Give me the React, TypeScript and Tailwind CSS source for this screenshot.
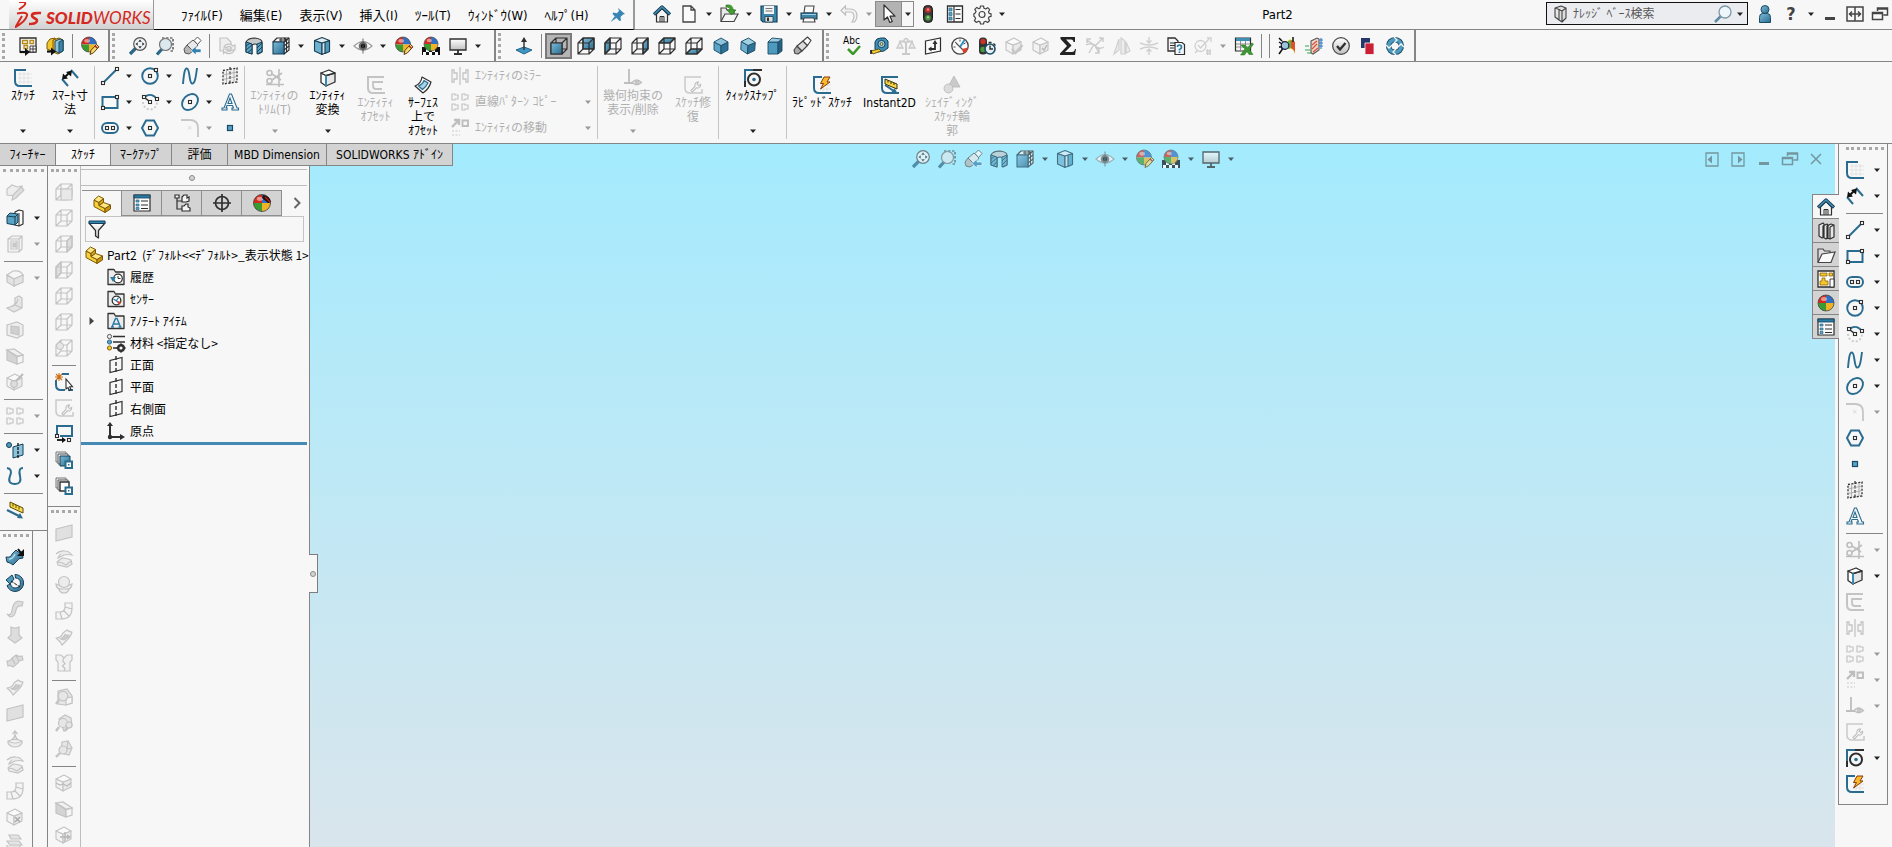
import React from 'react';

const BLUE = '#2a6c90';
const SKY = '#7dbbd8';
const INK = '#2f2f2f';
const MUTE = '#c3c3c3';

const dot = (x: number, y: number) => (
  <rect x={x - 1.5} y={y - 1.5} width="3" height="3" fill="#fff" stroke={INK} strokeWidth="1.1" />
);

const wire = (stroke: string, face?: string, fill = 'url(#blue)', front = false) => (
  <g fill="none" stroke={stroke} strokeWidth="1.2" strokeLinejoin="round">
    {face && !front && <path d={face} fill={fill} />}
    <path d="M1 6h11v11H1zM6 1h11v11H6zM1 6l5-5M12 6l5-5M12 17l5-5M1 17l5-5" />
    {face && front && <path d={face} fill={fill} />}
  </g>
);

const solid = (left: string, right: string, top: string) => (
  <g stroke="#1d4a63" strokeWidth="0.9" strokeLinejoin="round">
    <path d="M2 5l7 3.5V17l-7-4z" fill={left} />
    <path d="M16 5L9 8.500V17l7-4z" fill={right} />
    <path d="M9 1l7 4-7 3.500L2 5z" fill={top} />
  </g>
);

const grayCube = (
  <g stroke={MUTE} strokeWidth="1.1" strokeLinejoin="round">
    <path d="M1 5l7 3v9l-7-4z" fill="#f3f3f3" />
    <path d="M16 5L8 8v9l8-4z" fill="#e9e9e9" />
    <path d="M1 5l8-4 7 4-8 3z" fill="#fafafa" />
  </g>
);

const ball = (cx: number, cy: number, r: number) => (
  <g transform={`translate(${cx} ${cy}) scale(${r / 8})`}>
    <path d="M0 0V-8A8 8 0 0 0-8 0z" fill="#d62a1e" />
    <path d="M0 0H8A8 8 0 0 0 0-8z" fill="#2f6fc4" />
    <path d="M0 0V8A8 8 0 0 0 8 0z" fill="#f0b323" />
    <path d="M0 0H-8A8 8 0 0 0 0 8z" fill="#3a9a34" />
    <ellipse cx="-2" cy="-4" rx="3" ry="2" fill="#fff" opacity="0.5" />
    <circle r="8" fill="none" stroke="#444" strokeWidth="0.8" />
  </g>
);

const pencil = (
  <g strokeLinejoin="round">
    <path d="M9 17.500l1-4.200 5.500-5.800 2.500 2.300-5.500 6z" fill="#f7d774" stroke="#5a3c0c" strokeWidth="1" />
    <path d="M14 9l2.500 2.300" stroke="#b3261c" strokeWidth="1.500" />
  </g>
);

const part = (
  <g stroke="#7a5806" strokeWidth="1" strokeLinejoin="round">
    <path d="M1 5l5 2.500v3l6 3V17.500L1 11.500z" fill="#f6cf3a" />
    <path d="M12 13.500l5.500-3.500v4L12 17.500z" fill="#c9930f" />
    <path d="M1 5l4.500-4 5 2.500L6 7.500z" fill="#ffe680" />
    <path d="M6 7.500l4.500-4v4l-4.500 3z" fill="#d9a41c" />
    <path d="M6 10.500l4.500-3 7 2.500-5.500 3.500z" fill="#ffe680" />
  </g>
);

const repairWrench = (
  <path
    d="M7 14.500l4-4.200a3.200 3.200 0 0 1 3.500-4.200l-1.300 2 1.500 1.500 2-1.200a3.200 3.200 0 0 1-4.300 3.400l-4 4.100z"
    fill="#f2f2f2"
    stroke="#555"
    strokeWidth="1.1"
  />
);

const folder = (
  <path d="M1 16.500V1.500h6l1.500 2.500H17v12.500z" fill="#ececec" stroke="#333" strokeWidth="1.3" strokeLinejoin="round" />
);

const surface = (
  <g stroke={MUTE} strokeWidth="1.2" fill="#f3f3f3" strokeLinejoin="round">
    <path d="M1 10q5 0 7-5l4-3q2 2 5 2-1 4-4 7l-6 6q-1-3-6-7z" />
    <path d="M5 10.500q3 0 5-4 2 1 4 .5-1 3-5 5-2-.5-4-1.500z" fill="#cdcdcd" />
  </g>
);

const icons: Record<string, React.ReactNode> = {
  // sketch tools
  sketch: (
    <g fill="none">
      <path d="M4 5h14M4 9h14M4 13h14M6 3v12M10 3v12M14 3v12" stroke="#dedede" strokeWidth="0.8" />
      <path d="M12 1H1v11q0 5 5 5h12" stroke={BLUE} strokeWidth="2" />
    </g>
  ),
  dimension: (
    <g>
      <path d="M1 10l6 7M10 1l7 8" stroke={BLUE} strokeWidth="2" />
      <path d="M3 9l5.500-5.500" stroke="#111" strokeWidth="2" />
      <path d="M1 10.500l1-6 5 5zM11 1.500l-1 6L5 3z" fill="#111" />
    </g>
  ),
  line: <g><path d="M2 16L16 2" stroke={BLUE} strokeWidth="2" />{dot(2, 16)}{dot(16, 2)}</g>,
  rect: <g><path d="M1.500 4h15v11h-15z" fill="none" stroke={BLUE} strokeWidth="2" />{dot(2, 15)}{dot(16, 4)}</g>,
  slot: (
    <g><rect x="1" y="4" width="16" height="10" rx="5" fill="none" stroke={BLUE} strokeWidth="2" />{dot(6, 9)}{dot(12, 9)}</g>
  ),
  circle: <g><circle cx="9" cy="9" r="7.800" fill="none" stroke={BLUE} strokeWidth="1.900" />{dot(9, 9)}{dot(15, 3)}</g>,
  arc: (
    <g fill="none">
      <path d="M2 9a7 7.500 0 0 0 14 0" stroke="#c9c9c9" strokeWidth="1.800" strokeDasharray="2 2" />
      <path d="M4 4c4-4 10-2 12 3" stroke={BLUE} strokeWidth="1.900" />
      <path d="M3 4l6 5" stroke={INK} strokeWidth="1.500" />
      {dot(3, 4)}{dot(9, 9)}{dot(16, 6)}
    </g>
  ),
  spline: <path d="M2 17C3 5 4 1 6 1.500 9 2 8 16 11 16.500 14 17 15 9 16 1" fill="none" stroke={BLUE} strokeWidth="1.900" />,
  ellipse: (
    <g><ellipse cx="9" cy="9" rx="9" ry="6.800" transform="rotate(-45 9 9)" fill="none" stroke={BLUE} strokeWidth="1.900" />{dot(9, 9)}</g>
  ),
  polygon: <g><path d="M1 9l4-7.500h8L17 9l-4 7.500H5z" fill="none" stroke={BLUE} strokeWidth="2" />{dot(9, 9)}</g>,
  fillet: (
    <g fill="none" stroke="#c6c6c6"><path d="M0 1h9q8 0 8 8v9" strokeWidth="1.800" /><path d="M7 7l3.500 3.500M10.500 7L7 10.500" strokeWidth="0.6" /></g>
  ),
  point: <rect x="6.500" y="6.500" width="5" height="5" fill="#5aa3c4" stroke="#174a66" strokeWidth="1.200" />,
  gridPlane: (
    <g fill="none" stroke={INK}>
      <path d="M2 3.500L16 1v14L2 17z" strokeWidth="1.300" strokeDasharray="2 1.500" fill="#efefef" />
      <path d="M9 0v18" strokeWidth="1.200" strokeDasharray="3 1.500" />
      <path d="M5.500 3v13M13 2v13M2 8l14-3M2 12.500l14-3" strokeWidth="0.7" stroke="#9a9a9a" />
    </g>
  ),
  letter: (
    <g fill="#f7f7f7" stroke={BLUE} strokeWidth="1.100">
      <path d="M1 17h5v-2H5l1-2.500h5.500L12.500 15H11v2h6.500v-2h-1.500L10.500 1h-2L3 15H1zM7 10.500L9 5l2 5.500z" />
    </g>
  ),
  trim: (
    <g fill="none" stroke="#555" strokeWidth="1.600">
      <circle cx="3.500" cy="4" r="2.500" /><circle cx="3.500" cy="12" r="2.500" />
      <path d="M6 5l9 6M6 11l10-7M13 0v18M0 15.500h18" />
    </g>
  ),
  convert: (
    <g stroke={INK} strokeWidth="1.300" strokeLinejoin="round">
      <path d="M2 4l5 2.500V17l-5-3.500z" fill="#fff" /><path d="M7 6.500L16 4v9l-9 4z" fill="#e6e6e6" />
      <path d="M2 4l8-3 6 3-9 2.500z" fill="#fff" /><path d="M7 6.500V17" stroke="#3489b5" strokeWidth="2" />
    </g>
  ),
  offset: (
    <g fill="none" stroke="#666" strokeWidth="2"><path d="M17 1H1v11q0 5 5 5h12" /><path d="M16 6H6v4q0 3 3 3h6" strokeWidth="1.800" /></g>
  ),
  surfaceOffset: (
    <g fill="#f7f7f7" stroke={INK} strokeWidth="1.200" strokeLinejoin="round">
      <path d="M1 10Q7 8 8 1l9 5q-2 7-8 11z" />
      <path d="M4.500 10Q9 8 10 4.500l4 2.500q-2 4-5.500 6.500z" fill="#a9d3e6" stroke={BLUE} />
    </g>
  ),
  mirror: (
    <g fill="none" stroke="#666" strokeWidth="1.300"><path d="M9 0v18M1 3v12h2v-3h3V6H3V3zM17 3v12h-2v-3h-3V6h3V3z" /></g>
  ),
  pattern: (
    <g fill="none" stroke="#666" strokeWidth="1.200">
      <path d="M1 1v6h3V6h3V2H4V1zM11 1v6h3V6h3V2h-3V1zM1 11v6h3v-1h3v-4H4v-1zM11 11v6h3v-1h3v-4h-3v-1z" />
    </g>
  ),
  move: (
    <g fill="none" stroke="#555">
      <path d="M1 8l6-6M3 1h5v5" strokeWidth="2.400" /><path d="M11.500 1.500h5.500v5.500h-5.500z" strokeWidth="1.900" />
      <path d="M1 12h8M1 16h8" strokeWidth="2" strokeDasharray="2 1.500" opacity="0.4" />
    </g>
  ),
  relation: (
    <g fill="none" stroke="#555"><path d="M5 0v14M0 14h9" strokeWidth="1.800" />
      <path d="M8 13.500q4.500-5 9.500 0q-5 4.500-9.500 0z" strokeWidth="1.300" /><circle cx="13" cy="13.500" r="2" fill="#777" /></g>
  ),
  repair: <g><path d="M17 1H1v11q0 5 5 5h12V13" fill="none" stroke="#777" strokeWidth="1.500" />{repairWrench}</g>,
  snap: (
    <g fill="none"><path d="M1 18V1h17" stroke={BLUE} strokeWidth="2" /><path d="M9 1h9M1 12v6" stroke={INK} strokeWidth="2" />
      <circle cx="10" cy="10.500" r="6" stroke={INK} strokeWidth="2" /><circle cx="10" cy="10.500" r="1.800" fill={BLUE} /></g>
  ),
  rapid: (
    <g><path d="M7 9h11M7 13h11M10 6v10M14 6v10" stroke="#dcdcdc" strokeWidth="0.8" />
      <path d="M9 1H1v11q0 5 5 5h12" fill="none" stroke={BLUE} strokeWidth="2" />
      <path d="M11 1h6l-3 5h3L7.500 13l3-5.500H7.500z" fill="#f8b92a" stroke="#8a3b0c" strokeWidth="1" /></g>
  ),
  instant2d: (
    <g><path d="M17 1H1v11q0 5 5 5h12" fill="none" stroke={BLUE} strokeWidth="2" />
      <path d="M4 3l12 5v5L4 8z" fill="#f6d54a" stroke="#3a3000" strokeWidth="1" /><path d="M7 4.500v2M10 6v2M13 7v2" stroke="#3a3000" />
      <path d="M4 9l8 5.500" stroke={BLUE} strokeWidth="2" /><path d="M16 16.500l-5.500-.5 3-4z" fill={BLUE} /></g>
  ),
  shaded: (
    <g fill="#777" stroke="#444" strokeWidth="0.8"><path d="M11 0l6 11H5z" /><circle cx="5.500" cy="12.500" r="4.500" fill="#aaa" /></g>
  ),

  // standard toolbar
  home: (
    <g strokeLinejoin="round"><path d="M3.500 9v8h11V9L9 3.500z" fill="#f4f4f4" stroke={INK} strokeWidth="1.200" />
      <path d="M7 17v-5.500h4V17M9 11.500V17" fill="none" stroke={INK} strokeWidth="1" />
      <path d="M1 9.500L9 2l8 7.500" fill="none" stroke="#153f57" strokeWidth="3.200" /><path d="M1.500 9L9 2l7.500 7" fill="none" stroke="#4790b5" strokeWidth="1.400" /></g>
  ),
  doc: <path d="M3 1h8l4 4v12H3zM11 1v4h4" fill="#fafafa" stroke="#444" strokeWidth="1.300" />,
  open: (
    <g><path d="M1 16V3h5l1 2h7v4" fill="#e9e9e9" stroke="#444" strokeWidth="1.200" /><path d="M1 16.500L5 9h13l-4 7.500z" fill="#f6f6f6" stroke="#444" strokeWidth="1.200" />
      <path d="M6 0c5-.5 7 1 7 5h3l-4.500 5L7 5h3c0-2-1-3-4-3z" fill="#3fa02d" stroke="#246b18" strokeWidth="0.600" /></g>
  ),
  save: (
    <g><path d="M1 1h16v16H3l-2-2z" fill="#3c86ab" stroke="#153f57" strokeWidth="1.200" /><path d="M4 1h10v8H4z" fill="#f4f4f4" />
      <path d="M5.500 3.500h7M5.500 6h7" stroke="#777" /><path d="M5 11.500h8V17H5z" fill="#e0e0e0" stroke="#153f57" strokeWidth="0.800" /><path d="M7 12.500h2V16H7z" fill={INK} /></g>
  ),
  print: (
    <g><path d="M5 1h9l-1 7H4z" fill="#fafafa" stroke="#444" strokeWidth="1.100" /><path d="M1 8h16v6H1z" fill="#3c86ab" stroke="#153f57" strokeWidth="1.100" />
      <path d="M2 9.500h14" stroke="#9fd0e6" /><path d="M4 13h10l1 4H3z" fill="#fafafa" stroke="#444" strokeWidth="1.100" /></g>
  ),
  undo: <path d="M1 5.500L5.500 1v3H10q7 0 7 7 0 3-2.500 6h-2.500q2-3 2-5.500 0-4.500-4-4.500H5.500v3z" fill="#eee" stroke="#555" strokeWidth="1.200" />,
  cursor: <path d="M4 0v15l3.500-3 2.300 5.500 2.500-1.100-2.300-5.200H15z" fill="#fff" stroke={INK} strokeWidth="1.200" strokeLinejoin="round" />,
  traffic: (
    <g><rect x="4.500" y="0.500" width="9" height="17" rx="4" fill="#3a3a3a" stroke="#1a1a1a" /><circle cx="9" cy="5" r="2.800" fill="#c9322a" /><circle cx="9" cy="12.800" r="2.800" fill="#4a9a3c" />
      <circle cx="9" cy="4.500" r="1" fill="#f2a59f" /><circle cx="9" cy="12.300" r="1" fill="#b5e0a9" /></g>
  ),
  list: (
    <g><path d="M1.500 1h15v16h-15z" fill="#fafafa" stroke={INK} strokeWidth="1.300" /><path d="M3 3h3v3H3zM3 7.500h3v3H3zM3 12h3v3H3z" fill="#5aa3c4" stroke={BLUE} strokeWidth="0.700" />
      <path d="M9.500 4.500h5M9.500 9h5M9.500 13.500h5M8 1v16" stroke={INK} strokeWidth="1.200" /></g>
  ),
  gear: (
    <g fill="none" stroke="#444" strokeWidth="1.200" strokeLinejoin="round">
      <path d="M7.500 1h3l.5 2.300 1.700.7 2-1.300 2 2-1.200 2 .6 1.600 2 .5v2.500l-2 .5-.7 1.700 1.200 2-2 2-2-1.200-1.600.7-.5 2h-3l-.5-2.100-1.600-.7-2 1.300-2-2 1.200-2L1.800 12 .9 11.300V8.800L2.300 8l.7-1.600-1.200-2 2-2 2 1.300L7 3.200z" />
      <circle cx="9" cy="9.500" r="3" />
    </g>
  ),
  user: (
    <g fill="url(#blue)" stroke="#1b4c66" strokeWidth="1"><path d="M3.500 17.500v-5q0-4 3-4h5q3 0 3 4v5z" /><circle cx="9" cy="4.500" r="4" /></g>
  ),
  pin: (
    <g fill="#3685b5"><path d="M9 2l7 6-2 .5-2.500 2.500.5 3.500-1.500.5-7-7 .8-1.500 3.500.7L10 5z" /><path d="M6 10l-4.500 6L7.500 12z" /></g>
  ),
  restore: <path d="M6.500 6V3h10v7h-4M1.500 7.500h10v7h-10zM1.500 8.500h10M6.500 4h10" fill="none" stroke="#444" strokeWidth="1.500" />,
  span: <path d="M1 2h16v14H1zM9 2v14M4 9h10M6 6.500L3.500 9 6 11.500M12 6.500L14.500 9 12 11.500" fill="none" stroke="#444" strokeWidth="1.500" />,
  minimize: <path d="M4 12h10v3H4z" fill="#444" />,
  close: <path d="M4 4l10 10M14 4L4 14" stroke="#444" strokeWidth="1.500" />,
  paneLeft: <g><path d="M3 3h12v13H3z" fill="none" stroke="#444" strokeWidth="1.300" /><path d="M9 5.500v8L4.500 9.500z" fill="#444" /></g>,
  paneRight: <g><path d="M3 3h12v13H3z" fill="none" stroke="#444" strokeWidth="1.300" /><path d="M9 5.500v8l4.500-4z" fill="#444" /></g>,

  // view toolbar
  makeDrawing: (
    <g fill="none"><path d="M1 1h16v14H1z" fill="#f7f7f7" stroke={INK} strokeWidth="1.300" /><path d="M3.500 3.500h5v3h-5zM11 3.500h3.500v3H11zM5 8.500h3.500v3H5z" stroke="#b58a1a" strokeWidth="1.300" />
      <path d="M11 9h6v6h-6zM11 12h6M14 9v6" stroke={INK} strokeWidth="0.900" fill="#fff" /><path d="M1 15h6" stroke="#111" strokeWidth="2.200" /><path d="M6 11l5 4-5 4z" fill="#111" /></g>
  ),
  makeAssembly: (
    <g strokeLinejoin="round"><path d="M1 6l3-4 5-1 2 3v8l-3 3-7-3z" fill="#f3c62c" stroke="#7a5806" /><path d="M7 3l6-2 4 2v11l-5 3-5-2z" fill="#f0c030" stroke="#7a5806" />
      <path d="M9 4l5-2 3 1v11l-4 2-4-2z" fill="#8cc4dd" stroke="#1d4a63" /><path d="M13 5v11l4-2V3z" fill="#3c86ab" stroke="#1d4a63" /><path d="M1 14.500h5" stroke="#111" strokeWidth="2.200" /><path d="M5 10.500l5 4-5 4z" fill="#111" /></g>
  ),
  appearance: <g>{ball(8, 7.500, 7.500)}{pencil}</g>,
  scene: (
    <g><path d="M0 10h18v8H0z" fill="#111" /><path d="M1 15h3v3H1zM7 15h3v3H7zM13 15h3v3h-3zM4 12h3v3H4zM10 12h3v3h-3z" fill="#fff" />{ball(9, 7, 7)}</g>
  ),
  zoomFit: (
    <g><path d="M7 11l-6 6" stroke="#2c6786" strokeWidth="3.200" /><circle cx="11" cy="7" r="6.300" fill="#eef3f5" stroke="#555" strokeWidth="1.200" />
      <path d="M11 2.500l1.800 2.200H9.200zM11 11.500l1.800-2.200H9.200zM6.500 7l2.200-1.800v3.600zM15.500 7l-2.200-1.800v3.600z" fill={INK} /></g>
  ),
  zoomArea: (
    <g><path d="M6 1h11v13H13" fill="none" stroke={INK} strokeWidth="1.200" strokeDasharray="2.500 1.500" /><path d="M6 12l-5 5.500" stroke="#2c6786" strokeWidth="3.200" />
      <circle cx="9.500" cy="7.500" r="6" fill="#dbe8ee" stroke="#777" strokeWidth="1.200" /></g>
  ),
  prevView: (
    <g strokeLinejoin="round"><path d="M1 12l3-4 6 6-4 3-4-1z" fill="#b5b5b5" stroke="#555" /><path d="M4 8l6-5 5 5-5 6z" fill="#e9e9e9" stroke="#555" /><path d="M11 3.500L14.500 0 18 3.500l-3.500 4z" fill="#fff" stroke="#555" />
      <path d="M8 13.500l5-4.500v3h5v3.500h-5v2.500z" fill="#3182b0" stroke="#f7f7f7" strokeWidth="0.700" /></g>
  ),
  redraw: (
    <g fill="#eee" stroke={MUTE} strokeWidth="1.200"><path d="M2 1h7l4 4v9H2z" /><path d="M6 10a5 4 0 0 1 9-1l2-1v5h-5l1.500-2a3 2.500 0 0 0-5-.5zM16 13a5 4 0 0 1-9 2l-1.500 1.500V12h5l-1.500 1.500a3 2.500 0 0 0 4 0z" /></g>
  ),
  section: (
    <g strokeLinejoin="round"><path d="M1 5q2-4 9-4 7 1 7 4v10l-4 2V8q-3-2-6 0v9l-6-2z" fill="#c4c8ca" stroke={INK} strokeWidth="1.100" /><path d="M1 5l6 2v10l-6-2zM12 7l5-2v10l-5 2z" fill="#5aa3c4" stroke="#153f57" />
      <path d="M1 9l4-3M1 13l6-5M3 15.500l4-3.500M12 11l5-5M12 15l5-5" stroke="#153f57" strokeWidth="1" /></g>
  ),
  orient: (
    <g strokeLinejoin="round" fill="none"><path d="M5 1h12v12l-5 4V5H1z" fill="#f7f7f7" stroke={INK} strokeWidth="1.200" />
      <path d="M12 9l5-4M12 13l5-4M9 1v4M13 1v3M12 5l5-4M14.500 3v12" stroke={INK} strokeWidth="1.100" /><path d="M1 5h11v12H1z" fill="url(#blue)" stroke="#153f57" strokeWidth="1.100" /><path d="M7 3h8M12 1l3 2-3 2" stroke={INK} strokeWidth="1.200" /></g>
  ),
  display: (
    <g stroke="#1c3f52" strokeWidth="1.100" strokeLinejoin="round"><path d="M1.500 3.500l7.500 2.500v11.500l-7.500-3.500z" fill="#6db0d0" /><path d="M9 6l7.500-2.500v10.500L9 17.500z" fill="#cfe2ea" /><path d="M12 5v11.500l4.500-2V3.500z" fill="#4d9abf" /><path d="M1.500 3.500L9 .5l7.500 3L9 6z" fill="#dcecf3" /></g>
  ),
  eye: (
    <g><path d="M0 9q9-9 18 0-9 8-18 0z" fill="#fafafa" stroke="#9a9a9a" strokeWidth="1.200" /><circle cx="9" cy="9" r="4.300" fill="#6b6b6b" /><circle cx="9" cy="9" r="2.200" fill="#111" /><path d="M9 1.500v15" stroke="#555" strokeWidth="0.900" /></g>
  ),
  monitor: (
    <g><path d="M1 2h16v11H1z" fill="url(#gray)" stroke={INK} strokeWidth="1.300" /><path d="M9 13v4M5 17h8" stroke={INK} strokeWidth="1.800" /></g>
  ),
  normalTo: (
    <g><path d="M1 13l8-3 8 3-8 4z" fill="#3f97c6" stroke="#236285" /><path d="M9 13V3" stroke={INK} strokeWidth="1.400" /><path d="M9 0l3 5H6z" fill={INK} /></g>
  ),
  vFront: wire(INK, 'M1 6h11v11H1z', 'url(#blue)', true),
  vBack: wire(INK, 'M6 1h11v11H6z'),
  vLeft: wire(INK, 'M1 6l5-5v11l-5 5z'),
  vRight: wire(INK, 'M12 6l5-5v11l-5 5z'),
  vTop: wire(INK, 'M1 6l5-5h11l-5 5z'),
  vBottom: wire(INK, 'M1 17l5-5h11l-5 5z'),
  iso: solid('#5ba4c7', '#2d7399', '#8cc4dd'),
  trimetric: <g transform="rotate(4 9 9)">{solid('#6db0d0', '#2d7399', '#a0d0e4')}</g>,
  dimetric: (
    <g stroke="#1d4a63" strokeWidth="0.900" strokeLinejoin="round"><path d="M2 5h10v12H2z" fill="#4d9abf" /><path d="M12 5l4-3v12l-4 3z" fill="#24607f" /><path d="M2 5l4-4 10 1-4 3z" fill="#9bcde2" /></g>
  ),
  light: (
    <g stroke="#444" strokeWidth="1.100" strokeLinejoin="round"><path d="M1 13l3-4 5 5-4 3-3-.5z" fill="#a9a9a9" /><path d="M4 9l6-5 4.500 4.500L9 14z" fill="#dcdcdc" /><path d="M10 4l4.500-4L18 3.500l-3.500 5z" fill="#fafafa" /></g>
  ),

  // evaluate toolbar
  measure: (
    <g strokeLinejoin="round"><path d="M5 12V5q1-4 6-4h4l3 3v7l-4 3-7 1z" fill="#3f8fb5" stroke="#153f57" /><circle cx="11.500" cy="7" r="3.600" fill="#a6d2e6" stroke="#153f57" /><circle cx="11.500" cy="7" r="1.500" fill="#f0d060" stroke="#153f57" strokeWidth="0.700" />
      <path d="M1 14l8-2 2 2-8 3z" fill="#f3cf3e" stroke="#5c4700" strokeWidth="0.900" /><path d="M1 13v4" stroke="#111" strokeWidth="1.600" /></g>
  ),
  scale: (
    <g fill="none" stroke="#777" strokeWidth="1.300"><path d="M9 1v15M5 17h8M2 4.500h14" strokeWidth="2" /><path d="M0 11l3-6 3 6zM12 11l3-6 3 6z" fill="#ddd" /><circle cx="9" cy="3.500" r="2" fill="#ddd" /></g>
  ),
  sectionProps: (
    <g><path d="M1.500 4L16.500 1v13l-15 3z" fill="#fafafa" stroke={INK} strokeWidth="1.200" /><path d="M5 12h6V5" fill="none" stroke={INK} strokeWidth="1.800" /><path d="M11 3l2.500 4h-5z" fill={INK} /><path d="M7.500 9.500v5l-3.500-2.500z" fill={INK} /></g>
  ),
  gauge: (
    <g><circle cx="9" cy="9" r="8.200" fill="#fafafa" stroke="#444" strokeWidth="1.300" /><path d="M4 5l1.500 1M9 2.500v2M2.500 10h2M14.500 6l-2 1" stroke="#444" /><path d="M9 10l4.500-7" stroke="#2f8fc4" strokeWidth="2" />
      <path d="M5 6l7 7" stroke="#555" strokeWidth="1.200" /><path d="M11 12l6-1.500-1.500 4.500-3 1.500z" fill="#d3402c" /></g>
  ),
  trafficClock: (
    <g><rect x="1" y="0.500" width="8" height="17" rx="3.500" fill="#333" /><circle cx="5" cy="4.500" r="2.700" fill="#c9322a" /><circle cx="5" cy="12.500" r="2.700" fill="#4a9a3c" />
      <circle cx="12" cy="12" r="5" fill="#e4eef3" stroke="#1b4c66" strokeWidth="1.600" /><path d="M12 8.500V12h3M10.500 5.500h3M15.500 6.500l2 2" stroke={INK} strokeWidth="1.400" fill="none" /></g>
  ),
  cubeCheck: <g>{grayCube}<path d="M7 12l3.500 4 7-8" fill="none" stroke="#c6c6c6" strokeWidth="2.400" /></g>,
  cubeTick: <g>{grayCube}<path d="M10 11l2 2 3-5" fill="none" stroke="#b9b9b9" strokeWidth="1.400" /></g>,
  sigma: <path d="M1.500 0h14.500v5h-1.500q0-2.500-2.500-2.500H7l5.500 6-6.500 6.500h7q2.500 0 3-3H17L16 18H1v-1.500L8 9 1.500 2z" fill="#222" />,
  deviation: <g fill="none" stroke="#777" strokeWidth="1.400"><path d="M0 8q5-3 9 1 4 4 9 1M3 16l4-7M13 16L8 7M1 3l7 5M17 1l-8 8M1 6V2h4M13 1h4v4M13 12v4h-4" /></g>,
  draft: <g fill="#ddd" stroke="#888" strokeWidth="1.200"><path d="M1 17L6 2v11zM8 17V1l4 3v13zM13 5l4 9-4 2z" /></g>,
  undercut: <g fill="none" stroke="#888" strokeWidth="1.400"><path d="M0 6q9 4 18 0M0 12q9-4 18 0M9 0v6M9 18v-6M6.500 3.500L9 6l2.500-2.500M6.500 14.500L9 12l2.500 2.500" /></g>,
  compare: (
    <g><path d="M1 1h7l3 3v10H1z" fill="#f4f4f4" stroke={INK} strokeWidth="1.300" /><path d="M3 6h6M3 8.500h6M3 11h4" stroke={INK} strokeWidth="1" /><path d="M8 5.500h7l2.500 2v10H8z" fill="#f4f8fa" stroke={INK} strokeWidth="1.200" />
      <path d="M10.500 10q0-2 2-2t2 2-2 2.500v1M12.500 14.500v1.500" fill="none" stroke="#2a7ba6" strokeWidth="1.700" /></g>
  ),
  checkActive: <g fill="none" stroke="#888" strokeWidth="1.300"><circle cx="6.500" cy="9" r="5.500" /><path d="M4 8l2.500 3L15 2M13 1h4v4M1 16l3-3M12 14h5M12 16.500h5M13.500 12v6M16 12v6" /></g>,
  excel: (
    <g><path d="M0.500 1h15v13h-15z" fill="#f4f4f4" stroke={INK} strokeWidth="1.200" /><path d="M1 1h14v3H1z" fill="#3f8fb5" /><path d="M1 7h14M1 10h14M5.500 4v10M10.500 4v10" stroke="#777" strokeWidth="0.800" />
      <path d="M6 8h4l2.500 3L17 6l1.500 1-4 5.500 3.500 5h-4l-2-3-2.500 3.500H5.500l4.500-6z" fill="#3c9a32" stroke="#246b18" strokeWidth="0.500" /></g>
  ),
  simulation: (
    <g><path d="M3 3q6 3 9-1l5 3v12q-2-6-6-5z" fill="#f1dc3a" /><path d="M13 3l4 2v12q0-4-4-6z" fill="#e0522c" /><path d="M10 4l3-1v8l-3 1z" fill="#58b648" /><path d="M4 4l5 1-1 8-5-1z" fill="#3a4ea8" /><circle cx="7" cy="8.500" r="3.800" fill="#9cc6dc" stroke="#224" strokeWidth="1.200" />
      <path d="M4.500 12L1 17M1 1l3 3M1 5l3 2M1 10h3M15 0v5" stroke="#111" strokeWidth="1.500" /></g>
  ),
  flow: (
    <g fill="none" strokeWidth="1.100"><path d="M6 4l6-3 2 1v11l-6 4-2-1z" fill="#f3d3c6" stroke="#555" /><path d="M7 8l5-4M7 12l5-5M8 15l5-4" stroke="#d0503a" /><path d="M0 9h4M0 13h5M2 16h5" stroke="#35a64a" /><path d="M14 3h4M14 6h4M14 9h4M16 1v11" stroke="#2a7bc6" /></g>
  ),
  checkRound: <g><circle cx="9" cy="9" r="8.300" fill="url(#gray)" stroke="#444" strokeWidth="1.200" /><path d="M5 9l3 3.500L13.500 6" fill="none" stroke={INK} strokeWidth="2.400" /></g>,
  flags: <g><path d="M2 1h9v10H2z" fill="#27376b" /><path d="M6 6h9v11.500H6z" fill="#cc1f36" stroke="#f7f7f7" strokeWidth="0.800" /></g>,
  cycle: (
    <g><circle cx="9" cy="9" r="6.300" fill="none" stroke="#1b4c66" strokeWidth="5.600" /><circle cx="9" cy="9" r="6.300" fill="none" stroke="#4f9cc0" strokeWidth="3.600" />
      <path d="M8 0l3 3-3 3M10 12l-3 3 3 3M0 8l3 3 3-3M12 10l3-3 3 3" fill="none" stroke="#f7f7f7" strokeWidth="1.300" /></g>
  ),

  // left toolbars
  editSketch: (
    <g fill="#eee" stroke={MUTE} strokeWidth="1.100"><path d="M1 6l5-4 5 2 5-1v6l-6 4-9-1z" /><path d="M6 17l1-5 8-8 3 3-8 8z" fill="#dedede" /></g>
  ),
  extrude: (
    <g strokeLinejoin="round"><path d="M9 3l4-2 4 1v13l-4 2-4-1z" fill="#fafafa" stroke={INK} strokeWidth="1.200" /><path d="M13 4v13" stroke={INK} /><path d="M1 7l3-3 8 1v8l-3 3-8-1.500z" fill="#5aa3c4" stroke="#153f57" /><path d="M1 7l8 1 3-3M9 8v8" fill="none" stroke="#153f57" /></g>
  ),
  cut: <g fill="#f3f3f3" stroke={MUTE} strokeWidth="1.200"><path d="M2 4l4-3h10v13l-3 3H2zM13 17V4H2M13 4l3-3" /><path d="M5 6h6v8H5z" fill="#f7f7f7" /><path d="M7 8h3v4H7z" fill="#ccc" /></g>,
  filletFeature: <g stroke={MUTE} strokeWidth="1.200"><path d="M1 6l6-4q9-1 10 5l-9 3z" fill="#f6f6f6" /><path d="M1 6l7 4v7l-7-4zM8 10l9-4v7l-9 4z" fill="#e3e3e3" /></g>,
  rib: <g fill="#e6e6e6" stroke={MUTE} strokeWidth="1.200"><path d="M1 13l8-3V3l4-2 3 2v10l-8 4zM4 12q6-1 8-8M9 10l7 3" /></g>,
  shell: <g stroke={MUTE} strokeWidth="1.200"><path d="M1 4l10-3 6 3v10l-6 3-10-3z" fill="#eee" /><path d="M5 5l8 1v8l-8-2z" fill="#d0d0d0" /></g>,
  draftBody: <g stroke={MUTE} strokeWidth="1.200"><path d="M1 3l7-1 9 6-6 1z" fill="#f0f0f0" /><path d="M1 3l10 7v7L1 13z" fill="#d4d4d4" /><path d="M11 10l6-2v7l-6 2z" fill="#f5f5f5" /></g>,
  holeWizard: <g>{grayCube}<circle cx="8" cy="11" r="3.500" fill="#ddd" stroke="#bbb" /><path d="M10 8l7-7" stroke="#bbb" strokeWidth="2" /></g>,
  refGeom: (
    <g><circle cx="3" cy="4" r="2.500" fill="#4d9abf" stroke="#153f57" /><path d="M7 6l10-3v11L7 17z" fill="#8cc4dd" stroke="#153f57" /><path d="M12 2v15" stroke="#111" strokeWidth="1.300" strokeDasharray="3 1" /></g>
  ),
  curve: <path d="M1 1q6 1 3 8-3 8 5 8 7 0 5-8-2-8 3-8" fill="none" stroke={BLUE} strokeWidth="2" />,
  instant3d: (
    <g><path d="M4 1l13 6v5L4 6z" fill="#f8dc50" stroke="#5c4700" strokeWidth="1" /><path d="M7 2.500v3M10 4v3M13 5.500v3" stroke="#5c4700" /><path d="M1 9l12 6" stroke={BLUE} strokeWidth="2.200" /><path d="M17 17.500l-6-.5 3-5z" fill={BLUE} /></g>
  ),
  wire0: wire(MUTE, 'M6 6h11v11H6z', '#e8e8e8', true),
  wire1: wire(MUTE),
  wire2: wire(MUTE, 'M12 6l5-5v11l-5 5z', '#dedede'),
  wire3: wire(MUTE, 'M1 6l5-5v11l-5 5z', '#dedede'),
  wire4: <g>{wire(MUTE)}<circle cx="5" cy="7" r="3.500" fill="#e6e6e6" stroke={MUTE} /></g>,
  newSketch: (
    <g><path d="M7 1h7M1 7v5q0 5 5 5h4M13 17h5" fill="none" stroke={BLUE} strokeWidth="2" /><path d="M4 0v8M0 4h8M1 1l6 6M7 1L1 7" stroke="#c9701a" strokeWidth="1.100" />
      <path d="M11 6v10l2-1.500 1.500 3 1.500-.8-1.300-3H17.500z" fill="#fff" stroke={INK} strokeWidth="1.100" /></g>
  ),
  route: (
    <g fill="none"><path d="M2 10V1h15v10H5" stroke={BLUE} strokeWidth="2" /><path d="M2 15h8" stroke="#111" strokeWidth="1.800" /><path d="M7 12l4 3-4 3z" fill="#111" />{dot(2, 11)}{dot(14, 15)}</g>
  ),
  layers: (
    <g><path d="M1 1h10v10H1z" fill="#eee" stroke="#777" /><path d="M3 3h10v10H3z" fill="#eee" stroke="#555" /><path d="M5 5h10v10H5z" fill="url(#blue)" stroke="#153f57" /><path d="M10.500 10.500h6.500v6.500h-6.500z" fill="#fff" stroke="#2a6c90" strokeWidth="2" /><path d="M13 13h1.500v1.500H13z" fill="#2a6c90" /></g>
  ),
  layersOpen: (
    <g><path d="M1 1h10v10H1z" fill="#eee" stroke="#777" /><path d="M3 3h10v10H3z" fill="#f7f7f7" stroke="#555" /><path d="M5 5h9v9H5z" fill="#fff" stroke={INK} strokeWidth="1.400" /><path d="M10.500 10.500h6.500v6.500h-6.500z" fill="#fff" stroke="#2a6c90" strokeWidth="2" /><path d="M13 13h1.500v1.500H13z" fill="#2a6c90" /></g>
  ),
  surfExtrude: (
    <g strokeLinejoin="round"><path d="M0 9q5 1 6-3l4-4q1 3 6 2l1 6q-5 0-6 3l-4 4q-2-2-6-3z" fill="url(#blue)" stroke="#153f57" /><path d="M3 11q4 0 6-5" stroke="#b5dcec" fill="none" strokeWidth="1.500" /><path d="M12 1l3 4" stroke="#111" strokeWidth="2" /><path d="M18 1v7h-7z" fill="#111" /></g>
  ),
  surfRevolve: (
    <g strokeLinejoin="round"><path d="M9 .5a8.500 8.500 0 1 1-8 11l3.500-1.500a5 5 0 1 0 5-6z" fill="url(#blue)" stroke="#153f57" /><path d="M0 6l6-5 2 4-4 5z" fill="#4d9abf" stroke="#153f57" /><path d="M5 7l9 6" stroke="#111" strokeDasharray="3 1" /></g>
  ),
  sweep: <path d="M1 14q4 2 5-3 1-9 6-10l5 1-1 4q-5-1-6 4-1 7-6 7z" fill="#ddd" stroke={MUTE} strokeWidth="1.200" />,
  loft: <path d="M5 1q4 2 8 0v8l3 3-7 5-7-5 3-3z" fill="#ddd" stroke={MUTE} strokeWidth="1.200" />,
  boundary: <path d="M1 9q4 0 5-3l4-3q2 2 6 1l1 4q-4 0-5 3l-5 4q-2-2-5-1zM6 6l3 6M10 4l3 5" fill="#ddd" stroke={MUTE} strokeWidth="1.200" />,
  filled: surface,
  planar: <path d="M1 5l16-4v12L1 17z" fill="#e0e0e0" stroke={MUTE} strokeWidth="1.200" />,
  flatten: <g fill="#ececec" stroke={MUTE} strokeWidth="1.200"><path d="M2 11q7-3 14 0v2q-2 4-7 4t-7-4zM2 11q7 4 14 0M5 10q3-1 4-5 1 4 4 5" /><path d="M9 7V2M6.500 4L9 1l2.500 3" fill="none" /></g>,
  knit: <g fill="#ececec" stroke={MUTE} strokeWidth="1.200"><path d="M1 4q4-4 9-3 4 0 7 4-4-1-8 0l-6 3q1-3 3-4M2 12l5-4q5 0 9 2l1 4-5 3-9-2z" /><path d="M2 12q5 0 9 3l5-4" fill="none" /></g>,
  offsetSurf: <path d="M10 1h7v5q0 11-11 11H1v-7h4q5 0 5-5zM10 5l7 2M8 8l6 6M5 10l2 7" fill="#f4f4f4" stroke={MUTE} strokeWidth="1.200" />,
  deleteFace: <g>{grayCube}<path d="M9 9l5 5M14 9l-5 5" stroke="#aaa" strokeWidth="1.500" /></g>,
  replaceFace: <path d="M3 1h9l3 4H5zM1 7h12l3 4H4zM1 11v6h13v-6" fill="#e4e4e4" stroke={MUTE} strokeWidth="1.200" />,
  sphere: <g fill="#ececec" stroke={MUTE} strokeWidth="1.200"><path d="M1 8q0 6 8 6t8-6q-3 2-8 2t-8-2z" /><path d="M4 13q1 4 5 4t5-4z" /><ellipse cx="9" cy="6" rx="5.500" ry="5.500" /></g>,
  shirt: <path d="M1 1h5l3 3 3-3h5v5l-2 2v9H3V8L1 6zM9 4l-1.500 3L10 9.500 7.500 12 10 14.500 9 17" fill="#f2f2f2" stroke={MUTE} strokeWidth="1.200" />,
  inspect: <g fill="#e6e6e6" stroke={MUTE} strokeWidth="1.200"><path d="M3 3l9-2 5 7v7l-6 2-8-1z" /><path d="M11 10l6-1v6l-6 2z" fill="#f5f5f5" /><circle cx="8" cy="8" r="4.800" /><path d="M4 12l-3 4" strokeWidth="2.400" /></g>,
  inspectTwo: <g fill="#e6e6e6" stroke={MUTE} strokeWidth="1.200"><path d="M4 5l6-4 6 3 1 8-8 5z" /><circle cx="8" cy="9" r="4.500" /><circle cx="14" cy="11" r="3" /><path d="M4 13l-3 4M12 14l-2 3" strokeWidth="2.400" /></g>,
  inspectPart: <g fill="#e6e6e6" stroke={MUTE} strokeWidth="1.200"><path d="M7 2l6-1 4 7-3 7-8-2z" /><path d="M13 1l-1 8 5-1" fill="none" /><circle cx="8" cy="10" r="4" /><path d="M5 13l-4 4" strokeWidth="2.400" /></g>,
  split: <g>{grayCube}<path d="M1 9l4 2 3-1 4 2 4-3" stroke="#bbb" fill="none" strokeWidth="1.300" /></g>,
  moveBody: <g>{grayCube}<path d="M5 11h9M10 6v10M12 9l3 2-3 2" stroke="#b5b5b5" fill="none" strokeWidth="1.300" /></g>,

  // feature tree
  part,
  props: (
    <g><path d="M1 1h16v16H1z" fill="#fafafa" stroke={INK} strokeWidth="1.200" /><path d="M1 1h16v3H1z" fill="#2a7ba6" stroke="#153f57" strokeWidth="0.800" /><path d="M3 6h3v2H3zM3 10h3v2H3zM3 13.500h3v2H3z" fill="#5aa3c4" stroke={BLUE} strokeWidth="0.700" /><path d="M8 7h7M8 11h7M8 14.500h7" stroke={INK} strokeWidth="1.200" /></g>
  ),
  config: (
    <g fill="#f4f4f4" stroke={INK} strokeWidth="1.200"><path d="M4 3v12h5M4 7h5" fill="none" /><path d="M2 1h4v3H2zM9 3l2-2h3v3l2-1v4l-3 1H9zM9 12h2l2-2h2v3l2 1v3H9z" /></g>
  ),
  target: <g fill="none" stroke={INK} strokeWidth="1.700"><circle cx="9" cy="9" r="6.500" /><path d="M9 0v18M0 9h18" /></g>,
  displayPane: <g>{ball(9, 9, 8.500)}<path d="M10 1q7 1 8 7l-3 1-6-5z" fill="#2a0d0d" /><path d="M12 3l5 5" stroke="#b3261c" strokeWidth="1.300" /></g>,
  filter: (
    <g strokeLinejoin="round"><path d="M1 3l6.500 7.500V16l3 2v-7.500L17 3z" fill="url(#gray)" stroke={INK} strokeWidth="1.200" /><path d="M1 1h16v2.500H1z" fill="#2f86b2" stroke="#153f57" strokeWidth="1" /></g>
  ),
  history: <g>{folder}<circle cx="11" cy="10.500" r="4.300" fill="#fff" stroke={INK} strokeWidth="1.200" /><path d="M11 8v2.500h2.500" fill="none" stroke={INK} /><path d="M3 9h6l-3 5z" fill="#2a7ba6" /></g>,
  sensor: <g>{folder}<circle cx="9.500" cy="10.500" r="4.300" fill="#fff" stroke={INK} strokeWidth="1.300" /><path d="M9.500 10.500l2-3M6.500 9l6 4" stroke="#2a7ba6" strokeWidth="1.300" /><path d="M10 11.500h4.500L12 15z" fill="#d3402c" /></g>,
  annotation: <g>{folder}<path d="M5 15L8.500 6.500h1.500L13.500 15M6.500 12H12M4 15h3M11.500 15h3" fill="none" stroke="#2a7ba6" strokeWidth="1.500" /></g>,
  material: (
    <g><path d="M6 2.500h12M6 8h12M6 14h4" stroke={INK} strokeWidth="1.600" /><circle cx="2.500" cy="2.500" r="2.100" fill="#eee" stroke="#555" /><circle cx="2.500" cy="8" r="2.100" fill="#5aa3c4" stroke={BLUE} /><circle cx="2.500" cy="14" r="2.100" fill="#f3c62c" stroke="#8a6408" />
      <circle cx="14" cy="14" r="2.800" fill="none" stroke={INK} strokeWidth="2.400" /><path d="M14 9.500v1.500M14 17v1.500M9.500 14H11M17 14h1.500" stroke={INK} strokeWidth="2" /></g>
  ),
  plane: (
    <g fill="none" stroke={INK} strokeWidth="1.200"><path d="M3 4.500v12l12-3V1.500z" /><path d="M9 0v18" strokeDasharray="4 2" strokeWidth="1.400" /></g>
  ),
  origin: <g fill={INK}><path d="M2 2h2v13H2zM2 14h12v2H2zM0 4l3-4 3 4zM13 12l5 3-5 3z" /><circle cx="3" cy="15" r="2.200" /></g>,

  // task pane
  library: <g fill="#e6e6e6" stroke={INK} strokeWidth="1.200" strokeLinejoin="round"><path d="M2 3l4-2 1 1v13l-2 1-3-2zM6 4l4-2 1 1v13l-2 1-3-2zM10 4l4-2 3 1v12l-4 2-3-1zM13 5l4-2M13 5v12" /></g>,
  explorer: <g stroke="#444" strokeWidth="1.200"><path d="M1 16V3h5l1.500 2H13v3" fill="#ddd" /><path d="M1 16.500L5 8l13-2-4 10.500z" fill="#fafafa" /></g>,
  palette: (
    <g><path d="M1 1h16v16H1z" fill="#fff" stroke={INK} strokeWidth="1.300" /><path d="M3 3h7v3H3zM12 3h3.500v3H12zM5 8h3v3h3v4H3v-4h2z" fill="#f3c62c" stroke="#8a6408" strokeWidth="0.800" /><path d="M13 9h4v8h-4z" fill="#fff" stroke={INK} strokeWidth="0.900" /></g>
  ),
  sphereColors: ball(9, 9, 8),
  book: <path d="M4 3l6-2 5 2v10l-4 4-3-2V4.500L4 3v9l4 3M8 4.500L11 6l4-3M11 6v11" fill="#ddd" stroke="#444" strokeWidth="1.100" strokeLinejoin="round" />,
  search: <g><path d="M7 11l-6 6" stroke="#5d8aa5" strokeWidth="2.500" /><circle cx="11" cy="7" r="6" fill="#eef6fb" stroke="#7f97a6" strokeWidth="1.300" /></g>,
};

const Icon: React.FC<{ name: string; off?: boolean }> = ({ name, off }) => (
  <svg viewBox="0 0 18 18" className={`size-[18px] shrink-0 overflow-visible ${off ? 'opacity-35 grayscale' : ''}`}>
    {icons[name]}
  </svg>
);

const Caret: React.FC<{ off?: boolean }> = ({ off }) => (
  <svg viewBox="0 0 6 4" className="h-1 w-1.5 shrink-0">
    <path d="M0 0.500h6L3 4z" fill={off ? '#9a9a9a' : '#222'} />
  </svg>
);

// "name" plain, "name!" disabled, "name~" disabled but already drawn pale,
// "name>" with a menu, "|" a divider
const parse = (item: string) => ({
  name: item.replace(/[!~>]/g, ''),
  off: item.includes('!'),
  pale: item.includes('~'),
  menu: item.includes('>'),
});

const HBar: React.FC<{ items: string[]; active?: string }> = ({ items, active }) => (
  <>
    {items.map((item, i) => {
      if (item === '|') {
        return (
          <div key={i} className="flex w-2 shrink-0 justify-center">
            <div className="h-6 w-px bg-[#858585]" />
          </div>
        );
      }
      const { name, off, menu } = parse(item);
      return (
        <React.Fragment key={i}>
          <button
            aria-label={name}
            className={`flex h-[26px] w-[27px] shrink-0 items-center justify-center ${
              active === name ? 'border-2 border-[#7a7a7a] bg-[#b5b5b5]' : ''
            }`}
          >
            {name === 'abc' ? <Abc /> : <Icon name={name} off={off} />}
          </button>
          {menu && (
            <button aria-label={`${name} menu`} className="flex h-[26px] w-[14px] shrink-0 items-center justify-center">
              <Caret off={off} />
            </button>
          )}
        </React.Fragment>
      );
    })}
  </>
);

const Abc: React.FC = () => (
  <span className="flex flex-col items-center text-[10px] leading-[9px] text-black">
    Abc
    <svg viewBox="0 0 14 10" className="ml-1 h-[10px] w-[14px]">
      <path d="M1 4l5 5 7-8" fill="none" stroke="#3f9a2c" strokeWidth="2.600" />
    </svg>
  </span>
);

const VBar: React.FC<{ items: string[]; narrow?: boolean }> = ({ items, narrow }) => (
  <>
    <div className="h-[13px] shrink-0 px-[3px] pt-[3px]">
      <div className="border-t-[3px] border-dotted border-[#a8a8a8]" />
    </div>
    {items.map((item, i) => {
      if (item === '|') {
        return (
          <div key={i} className="flex h-2 shrink-0 items-center px-1">
            <div className="h-px w-full bg-[#858585]" />
          </div>
        );
      }
      const { name, off, pale, menu } = parse(item);
      return (
        <div key={i} className={`flex h-[26px] shrink-0 items-center ${narrow ? 'justify-center' : 'pl-1.5'}`}>
          <button aria-label={name}>
            <Icon name={name} off={off} />
          </button>
          {menu && (
            <button aria-label={`${name} menu`} className="ml-[10px] py-2">
              <Caret off={off || pale} />
            </button>
          )}
        </div>
      );
    })}
  </>
);

const Grip: React.FC = () => (
  <div className="flex w-[14px] shrink-0 py-[3px] pl-[2px]">
    <div className="h-[26px] border-l-[3px] border-dotted border-[#a8a8a8]" />
  </div>
);

const menus = ['ﾌｧｲﾙ(F)', '編集(E)', '表示(V)', '挿入(I)', 'ﾂｰﾙ(T)', 'ｳｨﾝﾄﾞｳ(W)', 'ﾍﾙﾌﾟ(H)'];

const TitleBar: React.FC = () => (
  <header className="flex h-[30px] shrink-0 items-stretch border-b border-[#858585]">
    <div className="ml-[9px] flex w-[145px] shrink-0 items-center gap-1 border-r border-[#999] bg-linear-to-b from-white to-[#d2d2d2] pl-[6px]">
      <svg viewBox="0 0 27 26" className="h-[26px] w-[27px] shrink-0" fill="none" stroke="#d5281e">
        <path d="M4 0h5q3 1.500-1 4.500L4 7.500" strokeWidth="2" />
        <path d="M2 11.500q11-2 10 2-1.500 6-11.500 11.500L7 14" strokeWidth="2" />
        <path d="M26 11q-9-.5-9 2.500 0 1.500 3 3t1.500 3.500q-1.500 2-7.500 2" strokeWidth="2.600" />
      </svg>
      <span className="pt-[6px] font-[Lato,sans-serif] text-[17px] leading-5 text-[#d5281e] italic">
        <b className="font-black">SOLID</b>WORKS
      </span>
    </div>
    <nav className="-mb-px flex w-[481px] shrink-0 items-center border-r-2 border-b border-r-[#9a9a9a] border-b-black pl-[27px]">
      <div className="flex gap-[17px] pt-[2px] text-[13px] leading-6 whitespace-nowrap">
        {menus.map((label) => (
          <button key={label}>{label}</button>
        ))}
      </div>
      <button aria-label="pin" className="mr-[6px] ml-auto">
        <Icon name="pin" />
      </button>
    </nav>
    <div className="ml-[13px] flex items-center pb-px">
      <HBar items={['home']} />
      {['doc', 'open', 'save', 'print', 'undo!'].map((item) => {
        const { name, off } = parse(item);
        return (
          <React.Fragment key={name}>
            <button aria-label={name} className="flex w-[27px] justify-center">
              <Icon name={name} off={off} />
            </button>
            <button aria-label={`${name} menu`} className="flex w-[13px] justify-center py-2">
              <Caret off={off} />
            </button>
          </React.Fragment>
        );
      })}
      <div className="flex h-[26px] w-[39px] border border-[#8a8a8a]">
        <button aria-label="select" className="flex w-[26px] items-center justify-center border-r border-[#8a8a8a] bg-[#b3b3b3]">
          <Icon name="cursor" />
        </button>
        <button aria-label="select menu" className="flex flex-1 items-center justify-center">
          <Caret />
        </button>
      </div>
      <HBar items={['traffic', 'list', 'gear>']} />
    </div>
    <h1 className="flex-1 text-center text-[13px] leading-[29px]">Part2</h1>
    <div className="mt-[2px] flex h-[23px] w-[202px] shrink-0 items-center border border-[#111] bg-[#ebecf0] px-1">
      <Icon name="book" />
      <input
        aria-label="ﾅﾚｯｼﾞ ﾍﾞｰｽ検索"
        placeholder="ﾅﾚｯｼﾞ ﾍﾞｰｽ検索"
        className="ml-1 min-w-0 flex-1 bg-transparent text-[12px] outline-none placeholder:text-[#555]"
      />
      <Icon name="search" />
      <button aria-label="search menu" className="ml-[5px] py-2">
        <Caret />
      </button>
    </div>
    <div className="ml-[3px] flex shrink-0 items-center pb-px">
      <HBar items={['user']} />
      <button aria-label="help" className="w-[26px] text-[18px] leading-[22px] font-bold text-[#444]">?</button>
      <button aria-label="help menu" className="flex w-[13px] justify-center py-2">
        <Caret />
      </button>
      {['minimize', 'span', 'restore'].map((name) => (
        <button key={name} aria-label={name} className="flex w-[25px] justify-center">
          <Icon name={name} />
        </button>
      ))}
    </div>
  </header>
);

const ToolBars: React.FC = () => (
  <div className="flex h-8 shrink-0 items-stretch border-b border-[#858585]">
    <div className="flex items-center border-r-2 border-[#858585] pr-[5px]">
      <Grip />
      <HBar items={['makeDrawing', 'makeAssembly', '|', 'appearance']} />
    </div>
    <div className="flex items-center border-r-2 border-[#858585] pr-[9px]">
      <Grip />
      <HBar
        items={[
          'zoomFit', 'zoomArea', 'prevView', '|', 'redraw', 'section', 'orient>', 'display>', 'eye>', 'appearance',
          'scene', 'monitor>',
        ]}
      />
    </div>
    <div className="flex items-center border-r-2 border-[#858585] pr-[7px]">
      <Grip />
      <HBar
        active="vFront"
        items={['normalTo', '|', 'vFront', 'vBack', 'vLeft', 'vRight', 'vTop', 'vBottom', 'iso', 'trimetric', 'dimetric', 'light']}
      />
    </div>
    <div className="flex items-center border-r-2 border-[#858585] pr-1.5">
      <Grip />
      <HBar
        items={[
          'abc', 'measure', 'scale!', 'sectionProps', 'gauge', 'trafficClock', 'cubeCheck', 'cubeTick', 'sigma',
          'deviation!', 'draft!', 'undercut!', 'compare', 'checkActive!>', 'excel', '|', '|', 'simulation', 'flow',
          'checkRound', 'flags', 'cycle',
        ]}
      />
    </div>
  </div>
);

type BigProps = { icon: string; lines: string[]; width: string; off?: boolean; menu?: boolean };

const Big: React.FC<BigProps> = ({ icon, lines, width, off, menu }) => (
  <button
    className={`flex shrink-0 flex-col items-center pb-[10px] text-[12px] leading-[14px] whitespace-nowrap ${width} ${
      menu ? 'pt-[7px]' : 'pt-[14px]'
    } ${off ? 'text-[#b0b0b0]' : 'text-black'}`}
  >
    <Icon name={icon} off={off} />
    <span className="mt-[2px] flex flex-col">
      {lines.map((line) => (
        <span key={line}>{line}</span>
      ))}
    </span>
    {menu && (
      <span className="mt-auto">
        <Caret off={off} />
      </span>
    )}
  </button>
);

const Rule: React.FC = () => <div className="my-1 w-px shrink-0 bg-[#c4c4c4]" />;

const sketchGrid = [
  ['line>', 'circle>', 'spline>', 'gridPlane'],
  ['rect>', 'arc>', 'ellipse>', 'letter'],
  ['slot>', 'polygon', 'fillet>', 'point'],
];

const Ribbon: React.FC = () => (
  <div className="flex h-[82px] shrink-0 border-b border-[#858585]">
    <Big icon="sketch" lines={['ｽｹｯﾁ']} width="w-[46px]" menu />
    <Big icon="dimension" lines={['ｽﾏｰﾄ寸', '法']} width="w-[48px]" menu />
    <Rule />
    <div className="flex w-[149px] shrink-0 flex-col pl-px">
      {sketchGrid.map((row) => (
        <div key={row[0]} className="flex h-[26px] items-center pt-[2px]">
          {row.map((item) => {
            const { name, menu } = parse(item);
            return (
              <div key={name} className="flex w-10 shrink-0 items-center">
                <button aria-label={name} className="flex w-[27px] justify-center">
                  <Icon name={name} />
                </button>
                {menu && (
                  <button aria-label={`${name} menu`} className="ml-[3px] py-2">
                    <Caret off={name === 'fillet'} />
                  </button>
                )}
              </div>
            );
          })}
        </div>
      ))}
    </div>
    <Rule />
    <Big icon="trim" lines={['ｴﾝﾃｨﾃｨの', 'ﾄﾘﾑ(T)']} width="w-[59px]" off menu />
    <Big icon="convert" lines={['ｴﾝﾃｨﾃｨ', '変換']} width="w-[47px]" menu />
    <Big icon="offset" lines={['ｴﾝﾃｨﾃｨ', 'ｵﾌｾｯﾄ']} width="w-[49px]" off />
    <Big icon="surfaceOffset" lines={['ｻｰﾌｪｽ', '上で', 'ｵﾌｾｯﾄ']} width="w-[46px]" />
    <div className="flex w-[151px] shrink-0 flex-col text-[12px] text-[#b0b0b0]">
      {[
        { icon: 'mirror', label: 'ｴﾝﾃｨﾃｨのﾐﾗｰ', menu: false },
        { icon: 'pattern', label: '直線ﾊﾟﾀｰﾝ ｺﾋﾟｰ', menu: true },
        { icon: 'move', label: 'ｴﾝﾃｨﾃｨの移動', menu: true },
      ].map((row) => (
        <button key={row.icon} className="flex h-[26px] items-center pt-[2px] pr-[6px] pl-[5px] whitespace-nowrap">
          <Icon name={row.icon} off />
          <span className="mr-auto ml-[6px]">{row.label}</span>
          {row.menu && <Caret off />}
        </button>
      ))}
    </div>
    <Rule />
    <Big icon="relation" lines={['幾何拘束の', '表示/削除']} width="w-[70px]" off menu />
    <Big icon="repair" lines={['ｽｹｯﾁ修', '復']} width="w-[50px]" off />
    <Rule />
    <Big icon="snap" lines={['ｸｨｯｸｽﾅｯﾌﾟ']} width="w-[67px]" menu />
    <Rule />
    <Big icon="rapid" lines={['ﾗﾋﾟｯﾄﾞｽｹｯﾁ']} width="w-[70px]" />
    <Big icon="instant2d" lines={['Instant2D']} width="w-[65px]" />
    <Big icon="shaded" lines={['ｼｪｲﾃﾞｨﾝｸﾞ', 'ｽｹｯﾁ輪', '郭']} width="w-[60px]" off />
  </div>
);

const tabs = [
  { label: 'ﾌｨｰﾁｬｰ', width: 'w-[56px]' },
  { label: 'ｽｹｯﾁ', width: 'w-[55px]' },
  { label: 'ﾏｰｸｱｯﾌﾟ', width: 'w-[61px]' },
  { label: '評価', width: 'w-[56px]' },
  { label: 'MBD Dimension', width: 'w-[99px]' },
  { label: 'SOLIDWORKS ｱﾄﾞｲﾝ', width: 'w-[126px]' },
];

const Tabs: React.FC = () => (
  <div role="tablist" className="flex h-[22px] shrink-0">
    {tabs.map(({ label, width }, i) => (
      <button
        key={label}
        role="tab"
        aria-selected={i === 1}
        className={`h-[22px] shrink-0 border-r border-b border-[#858585] pt-px text-[12px] leading-5 whitespace-nowrap ${width} ${
          i === 1 ? 'bg-[#f7f7f7]' : 'bg-[#d3d3d3]'
        }`}
      >
        {label}
      </button>
    ))}
  </div>
);

const tree = [
  { icon: 'history', label: '履歴' },
  { icon: 'sensor', label: 'ｾﾝｻｰ' },
  { icon: 'annotation', label: 'ｱﾉﾃｰﾄ ｱｲﾃﾑ', expand: true },
  { icon: 'material', label: '材料 <指定なし>' },
  { icon: 'plane', label: '正面' },
  { icon: 'plane', label: '平面' },
  { icon: 'plane', label: '右側面' },
  { icon: 'origin', label: '原点' },
];

const FeatureTree: React.FC = () => (
  <aside className="flex w-[228px] shrink-0 flex-col bg-[#f7f7f7] pt-[3px] pr-[2px] font-['Noto_Sans_CJK_JP',sans-serif]">
    <div className="flex h-[17px] items-center justify-center border-y border-[#bdbdbd] pr-1">
      <div className="size-[6px] rounded-full border border-[#8a8a8a] bg-[#d3d3d3]" />
    </div>
    <div className="mt-1 flex h-[26px]">
      {['part', 'props', 'config', 'target', 'displayPane'].map((name, i) => (
        <button
          key={name}
          aria-label={name}
          className={`flex w-10 shrink-0 items-center justify-center border-t border-r border-[#8f8f8f] ${
            i === 0 ? 'ml-px bg-[#f7f7f7]' : 'border-b bg-[#d3d3d3]'
          }`}
        >
          <Icon name={name} />
        </button>
      ))}
      <button aria-label="more" className="flex flex-1 items-center justify-center pl-1">
        <svg viewBox="0 0 8 12" className="h-3 w-2">
          <path d="M1.500 1l5 5-5 5" fill="none" stroke="#666" strokeWidth="2" />
        </svg>
      </button>
    </div>
    <label className="mr-[3px] ml-1 flex h-[26px] items-center border border-[#c4c4c4] pl-[2px]">
      <Icon name="filter" />
      <input aria-label="filter" className="min-w-0 flex-1 bg-transparent text-[12px] outline-none" />
    </label>
    <div className="flex h-6 items-center pt-[2px] pl-1 text-[12px] whitespace-nowrap">
      <Icon name="part" />
      <span className="ml-1">Part2&nbsp; (ﾃﾞﾌｫﾙﾄ&lt;&lt;ﾃﾞﾌｫﾙﾄ&gt;_表示状態 1&gt;</span>
    </div>
    <ul className="border-b-[3px] border-[#4589b5] text-[12px]">
      {tree.map((node) => (
        <li key={node.label} className="flex h-[22px] items-center pl-2 whitespace-nowrap">
          <span className="flex w-[18px]">
            {node.expand && (
              <svg viewBox="0 0 5 8" className="h-2 w-[5px]">
                <path d="M0.500 0v8L5 4z" fill="#444" />
              </svg>
            )}
          </span>
          <Icon name={node.icon} />
          <span className="ml-[5px]">{node.label}</span>
        </li>
      ))}
    </ul>
  </aside>
);

const Viewport: React.FC = () => (
  <main className="relative min-w-0 flex-1 border-l border-[#858585]">
    <div className="absolute -top-5 left-1/2 flex -translate-x-1/2 items-center opacity-70">
      {['zoomFit', 'zoomArea', 'prevView', 'section', 'orient>', 'display>', 'eye>', 'appearance', 'scene>', 'monitor>'].map(
        (item) => {
          const { name, menu } = parse(item);
          return (
            <React.Fragment key={name}>
              <button aria-label={name} className="flex h-[26px] w-[26px] items-center justify-center">
                <Icon name={name} />
              </button>
              {menu && (
                <button aria-label={`${name} menu`} className="flex w-[14px] justify-center py-2">
                  <Caret />
                </button>
              )}
            </React.Fragment>
          );
        },
      )}
    </div>
    <div className="absolute -top-5 right-1.5 flex opacity-50">
      {['paneLeft', 'paneRight', 'minimize', 'restore', 'close'].map((name) => (
        <button key={name} aria-label={name} className="flex h-[26px] w-[26px] items-center justify-center">
          <Icon name={name} />
        </button>
      ))}
    </div>
    <button
      aria-label="collapse"
      className="absolute top-[388px] -left-px flex h-[39px] w-[9px] items-center justify-center border border-l-0 border-[#7d7d7d] bg-[#f7f7f7]"
    >
      <span className="size-[6px] rounded-full border border-[#8a8a8a] bg-[#d3d3d3]" />
    </button>
    <div className="absolute top-7 -right-[4px] flex flex-col border-t border-l border-[#858585]">
      {['home', 'library', 'explorer', 'palette', 'sphereColors', 'props'].map((name, i) => (
        <button
          key={name}
          aria-label={name}
          className={`flex h-6 w-[26px] items-center justify-center border-b border-[#858585] ${
            i === 0 ? 'bg-[#f7f7f7]' : 'bg-[#d3d3d3]'
          }`}
        >
          <Icon name={name} />
        </button>
      ))}
    </div>
  </main>
);

const featureBar = [
  'editSketch', 'extrude>', 'cut~>', '|', 'filletFeature~>', 'rib', 'shell', 'draftBody', 'holeWizard', '|',
  'pattern!>', '|', 'refGeom>', 'curve>', '|', 'instant3d',
];
const surfaceBar = [
  'surfExtrude', 'surfRevolve', 'sweep', 'loft', 'boundary', 'filled', 'planar', 'flatten', 'knit', 'offsetSurf',
  'deleteFace', 'replaceFace',
];
const viewBar = [
  'wire0', 'wire1', 'wire2', 'wire3', 'wire1', 'wire1', 'wire4', '|', 'newSketch', 'repair!', 'route', 'layers', 'layersOpen',
];
const moldBar = [
  'planar', 'knit', 'sphere', 'offsetSurf', 'filled', 'shirt', '|', 'inspect', 'inspectTwo', 'inspectPart', '|',
  'split', 'draftBody', 'moveBody',
];
const sketchBar = [
  'sketch>', 'dimension>', '|', 'line>', 'rect>', 'slot>', 'circle>', 'arc>', 'spline>', 'ellipse>', 'fillet~>',
  'polygon', 'point', 'gridPlane', 'letter', '|', 'trim!>', 'convert>', 'offset!', 'mirror!', 'pattern!>', 'move!>',
  'relation!>', 'repair!', 'snap>', 'rapid',
];

const App: React.FC = () => (
  <div className="flex h-screen flex-col overflow-hidden bg-[#f7f7f7] font-['DejaVu_Sans_Condensed','Noto_Sans_CJK_JP',sans-serif] text-black">
    <svg className="absolute size-0">
      <defs>
        <linearGradient id="blue" x1="0" y1="0" x2="1" y2="1">
          <stop offset="0" stopColor={SKY} />
          <stop offset="1" stopColor={BLUE} />
        </linearGradient>
        <linearGradient id="gray" x1="0" y1="0" x2="0" y2="1">
          <stop offset="0" stopColor="#ffffff" />
          <stop offset="1" stopColor="#c0c0c0" />
        </linearGradient>
      </defs>
    </svg>
    <TitleBar />
    <ToolBars />
    <Ribbon />
    <div className="flex min-h-0 flex-1">
      <div className="flex min-w-0 flex-1 flex-col bg-linear-to-b from-[#a3ebfe] to-[#d9e5ec]">
        <Tabs />
        <div className="flex min-h-0 flex-1">
          <div className="flex w-12 shrink-0 flex-col border-r border-[#858585] bg-[#f7f7f7]">
            <div className="flex flex-col border-b border-[#858585] pb-[7px]">
              <VBar items={featureBar} />
            </div>
            <div className="flex min-h-0 w-[33px] flex-1 flex-col overflow-hidden border-r border-[#858585]">
              <VBar items={surfaceBar} />
            </div>
          </div>
          <div className="flex w-[33px] shrink-0 flex-col overflow-hidden border-r border-[#bdbdbd] bg-[#f7f7f7]">
            <div className="flex flex-col border-b border-[#858585] pb-[7px]">
              <VBar items={viewBar} narrow />
            </div>
            <VBar items={moldBar} narrow />
          </div>
          <FeatureTree />
          <Viewport />
        </div>
      </div>
      <div className="ml-[3px] flex w-[50px] shrink-0 flex-col self-start border-x border-b border-[#858585] pb-[7px] [&>div]:pl-[7px]">
        <VBar items={sketchBar} />
      </div>
      <div className="w-1 shrink-0" />
    </div>
  </div>
);

export default App;
